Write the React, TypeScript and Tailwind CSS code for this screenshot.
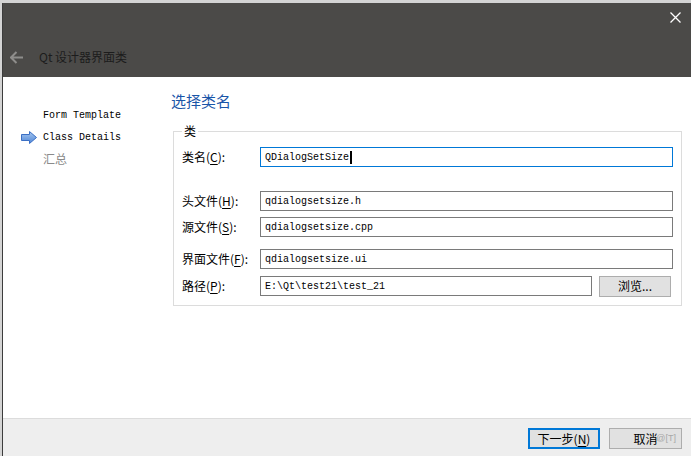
import React from "react";

const mono = { fontFamily: '"Liberation Mono", "DejaVu Sans Mono", monospace' };
const cjk = { fontFamily: '"Noto Sans CJK SC", "Noto Sans", sans-serif' };

function Field({ label, u, rest, value, focused }: { label: string; u: string; rest: string; value: string; focused?: boolean }) {
  return (
    <div className="flex items-center h-[20px]">
      <div className="w-[78px] text-[12px] text-black leading-none whitespace-nowrap" style={cjk}>
        {label}(<span className="underline underline-offset-2">{u}</span>){rest}
      </div>
      <div
        className={
          "flex-1 h-[20px] flex items-center pl-[4px] bg-white text-[10px] text-black " +
          (focused ? "border border-[#0078d7]" : "border border-[#7a7a7a]")
        }
        style={mono}
      >
        <span>{value}</span>
        {focused && <span className="inline-block w-[2px] h-[13px] bg-black ml-[1px]" />}
      </div>
    </div>
  );
}

export default function App() {
  return (
    <div className="w-[691px] h-[456px] bg-[#d4d4d4] pt-[3px] pl-[2px] overflow-hidden">
      <div className="h-[453px] flex flex-col border-l border-[#3c3c3c] bg-white">
        {/* Header */}
        <div className="h-[74px] bg-[#4b4a48] flex flex-col">
          <div className="flex justify-end pt-[9px] pr-[10px]">
            <svg width="11" height="11" viewBox="0 0 11 11">
              <path d="M0.5 0.5 L10.5 10.5 M10.5 0.5 L0.5 10.5" stroke="#ffffff" strokeWidth="1.3" />
            </svg>
          </div>
          <div className="flex-1" />
          <div className="flex items-center h-[20px] mb-[10px]">
            <svg width="14" height="13" viewBox="0 0 14 13" className="ml-[7px]">
              <path d="M1 6.5 H13 M6.5 1 L1 6.5 L6.5 12" stroke="#8e8d8b" strokeWidth="2" fill="none" />
            </svg>
            <span className="ml-[15px] text-[12px] text-[#1c1c1c] leading-none" style={cjk}>
              Qt 设计器界面类
            </span>
          </div>
        </div>

        {/* Body */}
        <div className="flex-1 flex">
          <div className="w-[168px] pt-[27px] flex flex-col">
            <div className="h-[22px] flex items-center pl-[40px] text-[10px] text-black" style={mono}>
              Form Template
            </div>
            <div className="h-[22px] flex items-center pl-[18px] text-[10px] text-black" style={mono}>
              <svg width="16" height="13" viewBox="0 0 16 13" className="mr-[6px]">
                <defs>
                  <linearGradient id="ag" x1="0" y1="0" x2="0" y2="1">
                    <stop offset="0" stopColor="#a8c8f0" />
                    <stop offset="1" stopColor="#4f86d6" />
                  </linearGradient>
                </defs>
                <path d="M0.5 3.5 H8.5 V0.5 L15.5 6.5 L8.5 12.5 V9.5 H0.5 Z" fill="url(#ag)" stroke="#3b6fc4" strokeWidth="1" />
              </svg>
              Class Details
            </div>
            <div className="h-[22px] flex items-center pl-[40px] text-[12px] text-[#8a8a8a]" style={cjk}>
              汇总
            </div>
          </div>

          <div className="flex-1 flex flex-col">
            <div className="h-[22px] mt-[12px] flex items-center text-[15px] text-[#1a55a8] leading-none" style={cjk}>
              选择类名
            </div>
            <div className="relative mt-[20px] ml-[2px] w-[509px] border border-[#dcdcdc] pl-[8px] pr-[8px] pt-[15px] pb-[9px] flex flex-col">
              <span className="absolute left-[8px] top-[-8px] bg-white px-[2px] text-[12px] leading-[14px] text-black" style={cjk}>
                类
              </span>
              <Field label="类名" u="C" rest=":" value="QDialogSetSize" focused />
              <div className="mt-[24px]">
                <Field label="头文件" u="H" rest=":" value="qdialogsetsize.h" />
              </div>
              <div className="mt-[6px]">
                <Field label="源文件" u="S" rest=":" value="qdialogsetsize.cpp" />
              </div>
              <div className="mt-[12px]">
                <Field label="界面文件" u="F" rest=":" value="qdialogsetsize.ui" />
              </div>
              <div className="mt-[7px] flex items-center h-[20px]">
                <div className="w-[78px] text-[12px] text-black leading-none whitespace-nowrap" style={cjk}>
                  路径(<span className="underline underline-offset-2">P</span>):
                </div>
                <div className="w-[332px] h-[20px] flex items-center pl-[4px] border border-[#7a7a7a] text-[10px] text-black" style={mono}>
                  E:\Qt\test21\test_21
                </div>
                <div className="ml-[7px] w-[72px] h-[21px] bg-[#e1e1e1] border border-[#adadad] flex items-center justify-center text-[12px] text-black" style={cjk}>
                  浏览...
                </div>
              </div>
            </div>
          </div>
        </div>

        {/* Footer */}
        <div className="h-[38px] bg-[#eeeeee] border-t border-[#dcdcdc] flex justify-end items-start pt-[9px] pr-[9px] gap-[9px]">
          <div className="w-[72px] h-[21px] bg-[#e1e1e1] border-2 border-[#0078d7] flex items-center justify-center text-[12px] text-black" style={cjk}>
            下一步(<span className="underline underline-offset-2">N</span>)
          </div>
          <div className="relative w-[73px] h-[21px] bg-[#e1e1e1] border border-[#adadad] flex items-center justify-center text-[12px] text-black" style={cjk}>
            取消
            <span className="absolute right-[5px] top-[5px] text-[9px] leading-none text-[#a8a8a8]" style={{ fontFamily: '"Liberation Sans", sans-serif' }}>
              @[T]
            </span>
          </div>
        </div>
      </div>
    </div>
  );
}
